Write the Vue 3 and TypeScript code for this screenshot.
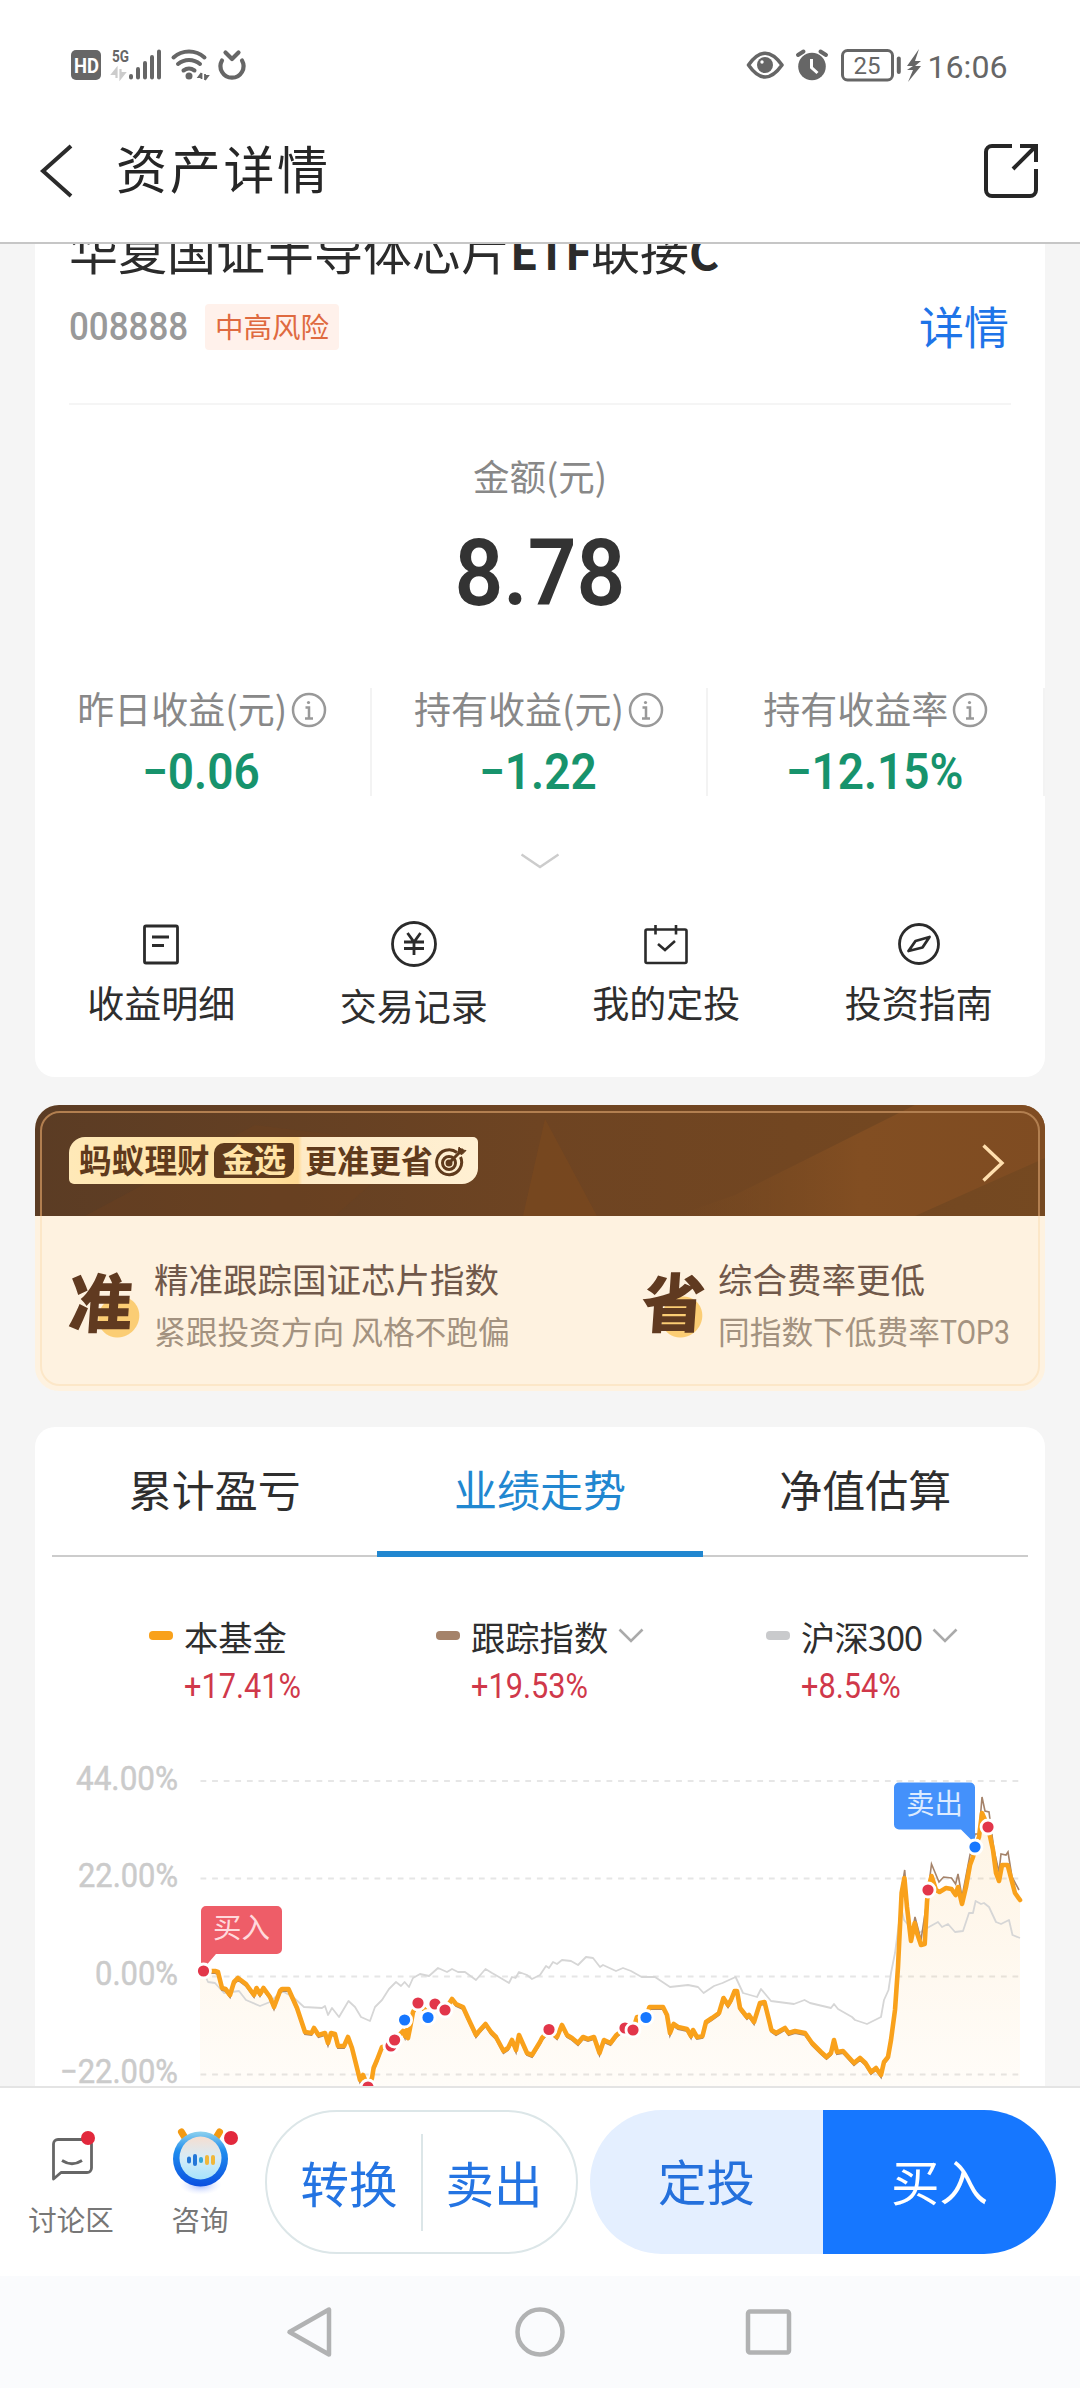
<script setup lang="ts">
interface Stat { label: string; value: string }
interface Dot { x: number; y: number; kind: 'buy' | 'sell' }
interface Legend { name: string; change: string; color: string; menu: boolean; width: number }

const stats: Stat[] = [
  { label: '昨日收益(元)', value: '−0.06' },
  { label: '持有收益(元)', value: '−1.22' },
  { label: '持有收益率', value: '−12.15%' },
]

const tabs = ['累计盈亏', '业绩走势', '净值估算']
const activeTab = 1

const legends: Legend[] = [
  { name: '本基金', change: '+17.41%', color: '#f9a11b', menu: false, width: 287 },
  { name: '跟踪指数', change: '+19.53%', color: '#a5836a', menu: true, width: 330 },
  { name: '沪深300', change: '+8.54%', color: '#c9cacc', menu: true, width: 240 },
]

const axis = [
  { y: 1781, label: '44.00%', len: 102 },
  { y: 1878.5, label: '22.00%', len: 100 },
  { y: 1976.5, label: '0.00%', len: 83 },
  { y: 2074.5, label: '−22.00%', len: 118 },
]

const fundLow =
  '203.5,1971 215,1971 218,1972 222,1988 225.5,1989 230,1995 234,1982 238,1978 246,1984 254,1995 256.5,1988 260,1994 263.5,1988 270,1997 274,2007 280,1991 282,1989 288.5,1989 297,2008 305,2032 311.5,2033 314,2028 318.5,2035 325,2033 328,2043 331,2033 335,2034 338,2046 344,2046 348,2037 352,2048 360,2080 363,2075 368,2087 372,2078 373.6,2068 377,2060 382,2047 391,2046 394.6,2040 403,2031 405,2036 406.5,2030 408,2038 410,2028 413,2012 418,2003 428,2013 435,2004 445,2010 452,1999 456,2004 463,2007 468,2018 476,2035 480,2030 485.5,2024 491,2032 496,2037 503.5,2051 508,2048 512,2040 516,2050 519,2035 527,2053 532,2055 540,2042 542,2038 549,2030 557,2037 562,2025 567,2035 572,2038 578,2043 583,2037 588,2039 594,2037 599.5,2053 604,2040 610.5,2043 616.5,2035 625,2028 633,2030 637,2017 646,2017 649.5,2007 663,2007 667,2015 670,2033 673.6,2024 678,2027 687,2029 691,2036 693,2030 697,2037 702.5,2036 706,2022 712,2018 719,2013 723.5,1998 728,2005 731,2000 734.6,1991 737,1991 740,2008 747,2017 749,2015 754,2022 760,2003 764.5,2002 769,2020 771.4,2030 776,2033 785,2028 788.6,2033 795,2031 805,2033 812,2043 821,2052 826.5,2057 831,2053 834,2040 837,2052 843,2051 854,2063 860,2058 865.4,2063 871,2072 876,2068 881,2075 884,2062 888,2057 891,2040 895,2010'
const fund =
  fundLow +
  ' 898,1967 901.6,1893 904.4,1878 907,1907 911,1941 914.7,1923 917,1933 921,1945 924.7,1944 927,1902 928,1890 931.5,1876 936,1890 939.5,1892 946,1888 951.5,1889 955.6,1895 958,1887 962,1904 966,1887 970,1865 973,1857 975,1847 979,1837 982,1813 988,1827 993,1850 996,1873 999,1881 1002,1865 1007.6,1865 1011,1878 1015,1893 1020,1900'
const area = fund + ' 1020,2090 200,2090 200,1971'
const tracked =
  '897,1975 901,1893 904.7,1870 907,1900 911,1938 915,1917 921,1940 927,1900 931.5,1864 939,1882 943.6,1877 951.5,1878 955.6,1884 958,1874 962,1897 970,1855 975,1834 979,1834 982,1797 985,1811 989,1812 994,1850 999,1872 1001,1854 1006,1855 1008,1852 1012,1877 1019,1890'
const csi =
  '203.5,1972 208,1982 215,1983 224,1993 239,1991 246,2000 260,2006 270,2002 282,1991 293,1997 304,2007 322,2008 325,2006 328,2015 332,2008 339,2017 348.5,2001 355,2007 361,2017 370,2021 375,2007 382,2000 389,1989 396,1982 401,1986 404.6,1982 409,1987 413,1978 420,1974 429,1976 438,1968 447,1972 452,1969 458,1972 465,1972 476,1980 485.5,1969 492,1973 499,1977 509,1983 512,1977 515.5,1978 519,1972 527,1975 532,1979 540,1975 546,1966 549,1968 553,1962 557,1964 562,1960 571,1961 578,1965 586,1957 593,1958 600,1967 603,1965 616,1971 623,1968 631,1971 641.6,1977 655,1977 670,1987 688,1985 698,1987 703.6,1993 714,1986 722.5,1983 735.6,1977 743,1993 757,1997 761,1989 771,2001 794,2004 804.5,2000 810,2003 831,2008 834,2004 838,2009 852,2017 855,2020 867,2024 881,2017 884,2000 888.5,1990 891,1973 895,1953 901,1907 904,1920 910,1927 919,1933 929,1927 938,1922 942,1927 948,1924 955,1932 963,1931 969,1913 973,1913 975.6,1901 981,1904 984,1903 989,1907 996,1922 1001,1924 1009,1920 1012.5,1935 1020,1938'

const dots: Dot[] = [
  { x: 203.5, y: 1971, kind: 'buy' },
  { x: 368, y: 2087, kind: 'buy' },
  { x: 391, y: 2046, kind: 'buy' },
  { x: 394.6, y: 2040, kind: 'buy' },
  { x: 404.6, y: 2020, kind: 'sell' },
  { x: 418, y: 2003, kind: 'buy' },
  { x: 428, y: 2017.5, kind: 'sell' },
  { x: 435, y: 2004, kind: 'buy' },
  { x: 445, y: 2010, kind: 'buy' },
  { x: 549, y: 2029.5, kind: 'buy' },
  { x: 625, y: 2028, kind: 'buy' },
  { x: 633, y: 2030, kind: 'buy' },
  { x: 646, y: 2017.5, kind: 'sell' },
  { x: 928, y: 1890, kind: 'buy' },
  { x: 975, y: 1847, kind: 'sell' },
  { x: 988, y: 1827, kind: 'buy' },
]
</script>

<template>
  <div class="screen">
    <div class="status">
      <svg class="st-left" width="180" height="36" viewBox="68 47 180 36">
        <rect x="71" y="51" width="30" height="30" rx="5" fill="#666" />
        <text x="74" y="73.5" font-size="20" font-weight="700" fill="#fff" textLength="25" lengthAdjust="spacingAndGlyphs">HD</text>
        <text x="112" y="63" font-size="17" font-weight="700" fill="#666" textLength="17" lengthAdjust="spacingAndGlyphs">5G</text>
        <path d="M116.500 79V70l-4 5h3M120.500 70v9l4-5h-3" stroke="#ccc" stroke-width="2.200" fill="#ccc" />
        <path d="M131 77v1.500M138 70v8.500M145 64v14.500M152 58v20.500M159 52.500v26" stroke="#666" stroke-width="4" stroke-linecap="round" />
        <g fill="none" stroke="#666" stroke-width="4" stroke-linecap="round">
          <path d="M173.500 58.500a23 23 0 0 1 31 0M178 65a17 17 0 0 1 22 0M183.500 71.500a9.500 9.500 0 0 1 11 0" />
        </g>
        <circle cx="189" cy="77" r="3.500" fill="#666" />
        <path d="M201.500 74v6M201.500 74l-3 4h3M205 81v-6M205 81l3-4h-3" stroke="#666" stroke-width="1.800" fill="#666" />
        <path d="M222 61.500a11.500 11.500 0 1 0 20 0" fill="none" stroke="#666" stroke-width="4.200" stroke-linecap="round" />
        <path d="M225.500 53.500l6.500 6.500 6.500-6.500" fill="none" stroke="#666" stroke-width="4.200" stroke-linecap="round" stroke-linejoin="round" />
      </svg>
      <svg width="266" height="38" viewBox="744 46 266 38">
        <path d="M748.500 65Q765 41.500 782 65Q765 89 748.500 65Z" fill="none" stroke="#666" stroke-width="3.600" stroke-linejoin="round" />
        <circle cx="765" cy="65" r="8" fill="#666" /><circle cx="762" cy="62" r="1.700" fill="#fff" />
        <circle cx="812" cy="66.500" r="13.800" fill="#666" />
        <path d="M811.500 59v8.500l6 5.500" fill="none" stroke="#fff" stroke-width="3" />
        <path d="M798 55l5.500-3.500M826 55l-5.500-3.500" stroke="#666" stroke-width="4" stroke-linecap="round" />
        <rect x="842.500" y="50.500" width="50" height="29.500" rx="5" fill="none" stroke="#666" stroke-width="3" />
        <text x="853.500" y="74" font-size="24" fill="#666" textLength="27" lengthAdjust="spacingAndGlyphs">25</text>
        <path d="M898.800 58.500v13.500" stroke="#666" stroke-width="4" stroke-linecap="round" />
        <path d="M919 49l-12 17h6l-6 4h6l-5 12 13-16h-6l6-5h-6z" fill="#666" />
        <text x="927.500" y="78" font-size="32" fill="#666" textLength="80" lengthAdjust="spacingAndGlyphs">16:06</text>
      </svg>
    </div>

    <header class="header">
      <svg width="36" height="56" viewBox="0 0 36 56"><path d="M33 3L5 28l28 25" fill="none" stroke="#2b2b2b" stroke-width="4" /></svg>
      <h1>资产详情</h1>
      <svg width="58" height="58" viewBox="982 142 58 58" fill="none" stroke="#262626" stroke-width="4">
        <path d="M1012 146h-20a6 6 0 0 0-6 6v38a6 6 0 0 0 6 6h38a6 6 0 0 0 6-6v-21" />
        <path d="M1020 146h16v16M1036 146l-23 23" />
      </svg>
    </header>

    <main class="content">
      <section class="card asset">
        <div class="fund-name">华夏国证半导体芯片<b>ETF</b>联接<b>C</b></div>
        <div class="fund-meta">
          <span class="code">008888</span>
          <span class="risk">中高风险</span>
          <span class="detail">详情</span>
        </div>
        <div class="rule"></div>
        <div class="amount-label">金额(元)</div>
        <div class="amount"><span>8.78</span></div>
        <div class="stats">
          <div v-for="s in stats" :key="s.label" class="stat">
            <div class="stat-label">
              {{ s.label }}
              <svg width="36" height="36" viewBox="0 0 36 36" fill="none" stroke="#999" stroke-width="2.500">
                <circle cx="18" cy="18" r="16" />
                <circle cx="17.500" cy="10.500" r="1.600" fill="#999" stroke="none" />
                <path d="M14.500 15.500h3.500v11M14 26.500h8" />
              </svg>
            </div>
            <div class="stat-value"><span>{{ s.value }}</span></div>
          </div>
        </div>
        <svg class="more" width="40" height="16" viewBox="0 0 40 16"><path d="M1.500 1.500L20 14 38.500 1.500" fill="none" stroke="#ccc" stroke-width="2.400" /></svg>
        <div class="actions">
          <div class="action">
            <svg width="48" height="48" viewBox="0 0 48 48" fill="none" stroke="#2b2b2b" stroke-width="2.800">
              <rect x="7.500" y="6" width="33" height="37" rx="1.500" /><path d="M15 17h17M15 25.500h12" />
            </svg>
            <span>收益明细</span>
          </div>
          <div class="action low">
            <svg width="48" height="48" viewBox="0 0 48 48" fill="none" stroke="#2b2b2b" stroke-width="2.800">
              <circle cx="24" cy="24" r="21.500" /><path d="M17.500 13l6.500 9 6.500-9M14 22h20M14 28.500h20M24 22v13" />
            </svg>
            <span>交易记录</span>
          </div>
          <div class="action">
            <svg width="48" height="48" viewBox="0 0 48 48" fill="none" stroke="#2b2b2b" stroke-width="2.600">
              <rect x="3.500" y="9.500" width="41" height="33.500" rx="1.500" /><path d="M13.500 5v9.500M34 5v9.500M16 24l7 6 10-9" />
            </svg>
            <span>我的定投</span>
          </div>
          <div class="action">
            <svg width="48" height="48" viewBox="0 0 48 48" fill="none" stroke="#2b2b2b" stroke-width="2.800">
              <circle cx="24" cy="24" r="19.500" /><path d="M34.500 17l-7 10.500-14 3.500 7-10z" stroke-linejoin="round" />
            </svg>
            <span>投资指南</span>
          </div>
        </div>
      </section>

      <section class="banner">
        <div class="banner-head">
          <svg class="facets" viewBox="0 0 1010 111" preserveAspectRatio="none">
            <defs>
              <linearGradient id="headFill" x1="0" x2="1" y1="0" y2="0">
                <stop offset="0" stop-color="#5b3c24" /><stop offset=".5" stop-color="#6e4422" /><stop offset=".75" stop-color="#724621" /><stop offset="1" stop-color="#754921" />
              </linearGradient>
              <linearGradient id="beam" x1="0" x2="1" y1="0" y2="0">
                <stop offset="0" stop-color="#7a4a20" stop-opacity="0" /><stop offset=".5" stop-color="#824e22" /><stop offset="1" stop-color="#7f4c22" />
              </linearGradient>
            </defs>
            <rect width="1010" height="111" fill="url(#headFill)" />
            <path d="M510 14L488 111H562Z" fill="#7a481f" opacity=".75" />
            <path d="M700 90L880 0H1010V53L880 111H640Z" fill="url(#beam)" />
            <path d="M50 111L220 20 380 40 300 111Z" fill="#6f431f" opacity=".35" />
          </svg>
          <div class="pill">
            <span class="brand">蚂蚁理财</span><span class="pick">金选</span><span class="slogan">更准更省</span>
            <svg width="32" height="34" viewBox="0 0 32 34" fill="none" stroke="#5f3a1c" stroke-width="3">
              <path d="M22 8.500A12.500 12.500 0 1 0 25.500 13" /><circle cx="14" cy="19" r="6.500" /><circle cx="14" cy="19" r="2" fill="#5f3a1c" />
              <path d="M14 19L28 5" /><path d="M23 9l1-6 3 3 4 .5-4 4z" fill="#5f3a1c" stroke-width="1" />
            </svg>
          </div>
          <svg class="arrow" width="24" height="38" viewBox="0 0 24 38"><path d="M1.500 1.500L20 19 1.500 36.500" fill="none" stroke="#ffdfae" stroke-width="3.400" /></svg>
        </div>
        <div class="banner-body">
          <div class="perk first">
            <span class="seal">准</span>
            <div><p>精准跟踪国证芯片指数</p><small>紧跟投资方向 风格不跑偏</small></div>
          </div>
          <div class="perk">
            <span class="seal">省</span>
            <div><p>综合费率更低</p><small>同指数下低费率<i>TOP3</i></small></div>
          </div>
        </div>
      </section>

      <section class="card trend">
        <nav class="tabs">
          <span v-for="(t, i) in tabs" :key="t" :class="{ active: i === activeTab }">{{ t }}</span>
        </nav>
        <div class="legends">
          <div v-for="l in legends" :key="l.name" class="legend" :style="{ width: l.width + 'px' }">
            <div class="legend-name">
              <i :style="{ background: l.color }"></i>{{ l.name }}
              <svg v-if="l.menu" width="26" height="16" viewBox="0 0 26 16"><path d="M1.500 1.500L13 13 24.500 1.500" fill="none" stroke="#aaa" stroke-width="2.600" /></svg>
            </div>
            <div class="legend-change"><span>{{ l.change }}</span></div>
          </div>
        </div>
        <svg class="chart" width="1010" height="346" viewBox="35 1740 1010 346">
          <defs>
            <linearGradient id="areaFill" gradientUnits="userSpaceOnUse" x1="0" y1="1810" x2="0" y2="2086">
              <stop offset="0" stop-color="#f9a11b" stop-opacity=".12" /><stop offset="1" stop-color="#f9a11b" stop-opacity=".03" />
            </linearGradient>
          </defs>
          <g v-for="a in axis" :key="a.label">
            <path :d="`M200.500 ${a.y}H1020`" stroke="#e6e6e6" stroke-width="2" stroke-dasharray="5.800 5.800" />
            <text :x="178 - a.len" :y="a.y + 8.500" font-size="33" fill="#cbcbcb" stroke="#cbcbcb" stroke-width=".5" :textLength="a.len" lengthAdjust="spacingAndGlyphs">{{ a.label }}</text>
          </g>
          <polygon :points="area" fill="url(#areaFill)" />
          <polyline :points="csi" fill="none" stroke="#d6d6d6" stroke-width="1.800" stroke-linejoin="round" />
          <polyline :points="fundLow" transform="translate(0 2)" fill="none" stroke="#a5836a" stroke-width="2" />
          <polyline :points="tracked" fill="none" stroke="#a5836a" stroke-width="1.600" />
          <polyline :points="fund" fill="none" stroke="#f9a11b" stroke-width="4.600" stroke-linejoin="round" stroke-linecap="round" />
          <path d="M206 1906h71a5 5 0 0 1 5 5v38a5 5 0 0 1-5 5h-61l-12 14h-3v-57a5 5 0 0 1 5-5z" fill="#ee5d68" />
          <path d="M899 1782.500h71a5 5 0 0 1 5 5v56l-14-14h-62a5 5 0 0 1-5-5v-37a5 5 0 0 1 5-5z" fill="#4491fb" />
          <text class="cjk" x="213" y="1938" font-size="28.500" fill="#ffd9dc">买入</text>
          <text class="cjk" x="906" y="1814" font-size="28.500" fill="#dcebff">卖出</text>
          <circle v-for="(d, i) in dots" :key="i" :cx="d.x" :cy="d.y" r="7" :fill="d.kind === 'buy' ? '#e2364a' : '#1677ff'" stroke="#fff" stroke-width="2.800" />
        </svg>
      </section>
    </main>

    <footer class="bottom">
      <div class="tool forum">
        <svg width="60" height="70" viewBox="0 0 60 70">
          <path d="M12.500 54V19a4.500 4.500 0 0 1 4.500-4.500h29a4.500 4.500 0 0 1 4.500 4.500v24a4.500 4.500 0 0 1-4.500 4.500H20z" fill="none" stroke="#666" stroke-width="2.800" stroke-linejoin="round" />
          <path d="M21 35.500q10 6.500 20 0" fill="none" stroke="#666" stroke-width="2.800" />
          <circle cx="47" cy="13" r="7" fill="#e2283c" />
        </svg>
        <span>讨论区</span>
      </div>
      <div class="tool">
        <svg width="80" height="70" viewBox="0 0 80 70">
          <defs>
            <linearGradient id="ring" x1="0" x2="0" y1="0" y2="1"><stop offset="0" stop-color="#8fd2ee" /><stop offset=".35" stop-color="#1f8dee" /><stop offset="1" stop-color="#0a4fe0" /></linearGradient>
            <linearGradient id="face" x1="0" x2="0" y1="0" y2="1"><stop offset="0" stop-color="#f6ded0" /><stop offset=".5" stop-color="#d6ecf8" /><stop offset="1" stop-color="#a5e3fb" /></linearGradient>
            <radialGradient id="glow"><stop offset="0" stop-color="#9cb4fb" /><stop offset="1" stop-color="#dfe6ff" stop-opacity="0" /></radialGradient>
          </defs>
          <ellipse cx="40.500" cy="60" rx="21" ry="10" fill="url(#glow)" />
          <path d="M21.500 7l6 10M59.500 7l-6 10" stroke="#f39a13" stroke-width="7" stroke-linecap="round" />
          <circle cx="40.500" cy="34" r="27.500" fill="url(#ring)" />
          <ellipse cx="40.500" cy="33" rx="21" ry="21.500" fill="url(#face)" />
          <g stroke-width="4" stroke-linecap="round"><path d="M29 33.500v3M35 31v8" stroke="#2377d8" /><path d="M41 34v2" stroke="#35a7d6" /><path d="M47 32v6M53 32v6" stroke="#f0b73a" /></g>
          <circle cx="71" cy="13" r="7" fill="#e2283c" />
        </svg>
        <span>咨询</span>
      </div>
      <div class="pair"><span>转换</span><i></i><span>卖出</span></div>
      <div class="cta"><span class="plan">定投</span><span class="buy">买入</span></div>
    </footer>

    <div class="navbar">
      <svg width="50" height="54" viewBox="0 0 50 54"><path d="M44 4.500v45L4.500 27z" fill="none" stroke="#b1b2b3" stroke-width="4.500" stroke-linejoin="round" /></svg>
      <svg width="54" height="54" viewBox="0 0 54 54"><circle cx="27" cy="27" r="22.500" fill="none" stroke="#b1b2b3" stroke-width="4.500" /></svg>
      <svg width="50" height="54" viewBox="0 0 50 54"><rect x="3" y="6.500" width="41" height="41" rx="2" fill="none" stroke="#b1b2b3" stroke-width="4.500" /></svg>
    </div>
  </div>
</template>

<style>
body { margin: 0; background: #f5f5f5; }
</style>

<style scoped>
.screen {
  width: 1080px; height: 2388px; display: flex; flex-direction: column; overflow: hidden;
  background: #f5f5f5; color: #2e2e2e;
  font-family: "Noto Sans CJK SC", "Noto Sans", sans-serif;
}
svg { display: block; flex: none; }
svg text { font-family: Roboto, "Noto Sans CJK SC", sans-serif; }
svg text.cjk { font-family: "Noto Sans CJK SC", sans-serif; }

.status { height: 84px; box-sizing: border-box; padding: 46px 70px 0 68px; display: flex; justify-content: space-between; background: #fff; }
.header { height: 160px; box-sizing: border-box; padding: 16px 40px 0 38px; border-bottom: 2px solid #c6c6c6; background: #fff; display: flex; align-items: center; }
.header h1 { margin: -9px auto 0 42px; font-size: 51px; font-weight: 400; letter-spacing: 2.700px; line-height: 70px; color: #262626; }

.content { height: 1842px; overflow: hidden; flex: none; }
.card { margin: 0 35px; background: #fff; border-radius: 20px; }
.asset { margin-top: -25px; height: 858px; }
.fund-name { height: 60px; line-height: 60px; padding-left: 34px; font-size: 49px; font-weight: 400; color: #2b2b2b; white-space: nowrap; }
.fund-name b { font-weight: 600; font-size: 46px; letter-spacing: -1px; }
.fund-meta { height: 46px; margin-top: 25px; padding: 0 36px 0 34px; display: flex; align-items: center; }
.code { width: 119px; font: 500 38px/46px Roboto, sans-serif; color: #999; transform: scaleX(.92); transform-origin: 0 50%; }
.risk { margin-left: 17px; width: 134px; height: 46px; line-height: 43px; font-size: 28.500px; text-align: center; color: #df6a40; background: #fff1eb; border-radius: 4px; }
.detail { margin-left: auto; font-size: 45px; line-height: 46px; color: #1e74e8; margin-top: -2px; }
.rule { margin: 53px 34px 0; height: 2px; background: #f5f5f5; }
.amount-label { margin-top: 46px; height: 50px; line-height: 50px; text-align: center; font-size: 36.500px; color: #888; }
.amount { margin-top: 28px; height: 90px; text-align: center; }
.amount span { display: inline-block; font: 600 93px/90px Roboto, sans-serif; color: #333; transform: scaleX(.92); }
.stats { margin-top: 69px; height: 108px; display: flex; }
.stat { flex: 1; box-sizing: border-box; border-right: 2px solid #f3f3f3; }
.stat-label { height: 40px; line-height: 40px; display: flex; justify-content: center; align-items: center; gap: 4px; font-size: 37px; color: #888; white-space: nowrap; }
.stat-label svg { margin-top: 3px; }
.stat-value { height: 50px; margin-top: 19px; text-align: center; }
.stat-value span { display: inline-block; font: 600 50px/50px Roboto, sans-serif; color: #17936c; transform: translateX(-1px) scaleX(.92); }
.more { margin: 57px auto 0; }
.actions { margin-top: 51px; display: flex; }
.action { flex: 1; display: flex; flex-direction: column; align-items: center; }
.action span { margin-top: 14px; height: 40px; line-height: 40px; font-size: 37px; }
.low span { margin-top: 17px; }

.banner { position: relative; margin: 28px 35px 0; height: 286px; border-radius: 24px; overflow: hidden; background: #fef2e0; }
.banner-head { position: relative; height: 111px; box-sizing: border-box; padding: 32px 39px 0 34px; display: flex; justify-content: space-between; align-items: flex-start; overflow: hidden; }
.banner-head::after { content: ""; position: absolute; inset: 6px 5px -30px; border: 2px solid #b27f50; border-radius: 20px; }
.facets { position: absolute; inset: 0; width: 1010px; height: 111px; }
.pill { position: relative; width: 409px; height: 47px; box-sizing: border-box; padding-left: 10px; display: flex; align-items: center; background: linear-gradient(90deg, #ffe9b8 0, #ffdf9c 50%, #ffd994 56%, #feeac6 57%, #fff0d3 100%); border-radius: 16px 5px 16px 5px; font-size: 32.500px; font-weight: 700; color: #5f3a1c; white-space: nowrap; line-height: 44px; }
.brand { width: 134px; letter-spacing: .200px; }
.brand, .slogan { margin-top: -3px; }
.pick { width: 80px; height: 35px; margin-left: 1px; line-height: 31px; text-align: center; background: #5f3a1c; color: #ffe3a6; border-radius: 10px 3px 10px 3px; font-size: 32px; }
.slogan { width: 130px; margin-left: 11px; font-size: 32px; font-weight: 700; }
.arrow { position: relative; margin-top: 7px; }
.banner-body { position: relative; height: 175px; box-sizing: border-box; padding: 40px 0 0 34px; display: flex; overflow: hidden; }
.banner-body::after { content: ""; position: absolute; inset: -30px 5px 5px; border: 2px solid #fce7c8; border-radius: 20px; }
.perk { display: flex; white-space: nowrap; }
.first { width: 573px; }
.seal { width: 85px; height: 80px; line-height: 80px; margin-top: 3px; font-size: 64px; font-weight: 900; color: #603a20; transform: skewX(-4deg); background: radial-gradient(circle at 51px 58px, #fbcd74 20px, transparent 21px); }
.perk:last-child .seal { width: 76px; background: radial-gradient(circle at 41px 58px, #fbcd74 20px, transparent 21px); }
.perk p { margin: 0; height: 48px; line-height: 44px; font-size: 34.500px; color: #70584a; }
.perk small { display: block; height: 48px; line-height: 52px; font-size: 31.700px; color: #a39280; }
.perk i { display: inline-block; font: 33px/40px Roboto, sans-serif; transform: scaleX(.86); transform-origin: 0 50%; width: 68px; }

.trend { margin-top: 36px; height: 700px; }
.tabs { margin: 0 17px; height: 130px; box-sizing: border-box; border-bottom: 2px solid #ccc; display: flex; }
.tabs span { flex: 1; text-align: center; font-size: 43px; line-height: 122px; height: 130px; box-sizing: border-box; }
.tabs .active { color: #2187d0; border-bottom: 6px solid #2187d0; }
.legends { margin-top: 57px; padding-left: 114px; height: 126px; display: flex; }
.legend-name { height: 44px; line-height: 44px; display: flex; align-items: center; font-size: 34.300px; white-space: nowrap; }
.legend:last-child .legend-name { letter-spacing: -.900px; }
.legend-name i { width: 24px; height: 9px; margin-right: 11px; border-radius: 4px; margin-top: -2px; }
.legend-name svg { margin-left: 10px; }
.legend-change { margin: 8px 0 0 35px; height: 40px; }
.legend-change span { display: inline-block; font: 34.500px/40px Roboto, sans-serif; color: #d0384a; transform: scaleX(.89); transform-origin: 0 50%; }

.bottom { height: 190px; box-sizing: border-box; border-top: 2px solid #e4e4e4; background: #fff; display: flex; padding: 22px 0 0 20px; flex: none; }
.tool { width: 110px; display: flex; flex-direction: column; align-items: center; padding-top: 15px; box-sizing: border-box; }
.forum { width: 102px; margin-right: 23px; }
.tool span { margin-top: 4px; line-height: 40px; font-size: 28.500px; color: #777; }
.pair { margin-left: 10px; width: 313px; height: 144px; box-sizing: border-box; border: 2px solid #dce6e8; border-radius: 72px; display: flex; align-items: center; justify-content: center; gap: 23px; font-size: 48.500px; color: #2474e2; }
.pair span { line-height: 138px; }
.pair i { width: 2px; height: 97px; background: #dce6e8; }
.cta { margin-left: 12px; width: 466px; height: 144px; display: flex; border-radius: 72px; overflow: hidden; font-size: 48.500px; text-align: center; }
.cta span { flex: 1; line-height: 140px; }
.plan { background: #e4efff; color: #2470dc; }
.buy { background: #1677ff; color: #fff; }
.navbar { flex: 1; background: #fafbfd; display: flex; align-items: center; justify-content: center; gap: 178px; }
</style>
